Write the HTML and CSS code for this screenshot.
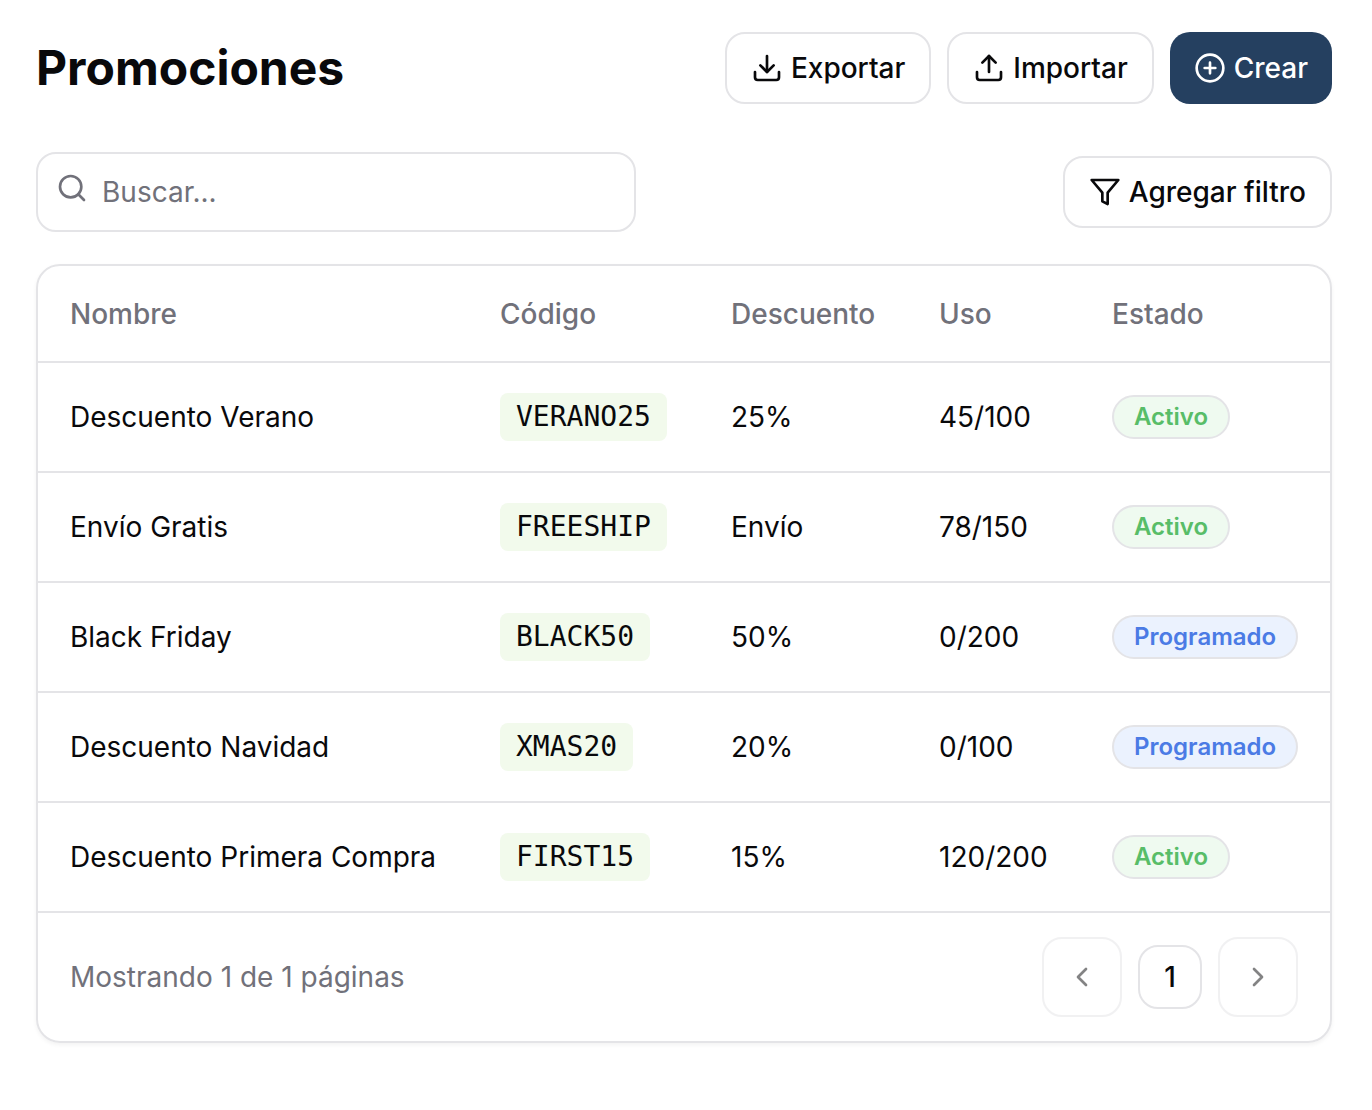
FILE: index.html
```html
<!DOCTYPE html>
<html lang="es">
<head>
<meta charset="utf-8">
<meta name="viewport" content="width=device-width, initial-scale=1">
<title>Promociones</title>
<link rel="stylesheet" href="styles.css">
</head>
<body>
<main class="page">
  <header class="page-header">
    <h1 class="page-title">Promociones</h1>
    <div class="actions">
      <button class="btn" type="button">
        <svg class="icon" viewBox="0 0 24 24" aria-hidden="true"><path d="M21 15v4a2 2 0 0 1-2 2H5a2 2 0 0 1-2-2v-4"/><path d="M7 10l5 5 5-5"/><path d="M12 15V3"/></svg>
        Exportar
      </button>
      <button class="btn" type="button">
        <svg class="icon" viewBox="0 0 24 24" aria-hidden="true"><path d="M21 15v4a2 2 0 0 1-2 2H5a2 2 0 0 1-2-2v-4"/><path d="M17 8l-5-5-5 5"/><path d="M12 3v12"/></svg>
        Importar
      </button>
      <button class="btn btn-primary" type="button">
        <svg class="icon" viewBox="0 0 24 24" aria-hidden="true"><circle cx="12" cy="12" r="10"/><path d="M8 12h8M12 8v8"/></svg>
        Crear
      </button>
    </div>
  </header>

  <div class="toolbar">
    <label class="search">
      <svg class="icon search-icon" viewBox="0 0 24 24" aria-hidden="true"><circle cx="11" cy="11" r="8"/><path d="M21 21l-4.3-4.3"/></svg>
      <input class="search-input" type="text" placeholder="Buscar..." aria-label="Buscar">
    </label>
    <button class="btn" type="button">
      <svg class="icon" viewBox="0 0 24 24" aria-hidden="true"><path d="M22 3H2l8 9.46V19l4 2v-8.54L22 3z"/></svg>
      Agregar filtro
    </button>
  </div>

  <section class="card">
    <table class="table">
      <thead>
        <tr><th class="col-name">Nombre</th><th class="col-code">Código</th><th class="col-discount">Descuento</th><th class="col-use">Uso</th><th>Estado</th></tr>
      </thead>
      <tbody>
        <tr><td>Descuento Verano</td><td><code class="code">VERANO25</code></td><td>25%</td><td>45/100</td><td><span class="badge badge-active">Activo</span></td></tr>
        <tr><td>Envío Gratis</td><td><code class="code">FREESHIP</code></td><td>Envío</td><td>78/150</td><td><span class="badge badge-active">Activo</span></td></tr>
        <tr><td>Black Friday</td><td><code class="code">BLACK50</code></td><td>50%</td><td>0/200</td><td><span class="badge badge-scheduled">Programado</span></td></tr>
        <tr><td>Descuento Navidad</td><td><code class="code">XMAS20</code></td><td>20%</td><td>0/100</td><td><span class="badge badge-scheduled">Programado</span></td></tr>
        <tr><td>Descuento Primera Compra</td><td><code class="code">FIRST15</code></td><td>15%</td><td>120/200</td><td><span class="badge badge-active">Activo</span></td></tr>
      </tbody>
    </table>
    <footer class="card-footer">
      <p class="summary">Mostrando 1 de 1 páginas</p>
      <nav class="pager" aria-label="Paginación">
        <button class="pager-step" type="button" disabled aria-label="Anterior"><svg class="icon" viewBox="0 0 24 24" aria-hidden="true"><path d="M15 18l-6-6 6-6"/></svg></button>
        <button class="pager-page" type="button" aria-current="page">1</button>
        <button class="pager-step" type="button" disabled aria-label="Siguiente"><svg class="icon" viewBox="0 0 24 24" aria-hidden="true"><path d="M9 18l6-6-6-6"/></svg></button>
      </nav>
    </footer>
  </section>
</main>
</body>
</html>
```

FILE: styles.css
```css
:root {
  --border: #e4e4e7;
  --text: #09090b;
  --muted: #71717a;
  --primary: #254060;
}

* {
  box-sizing: border-box;
}

body {
  margin: 0;
  background: #fff;
  color: var(--text);
  font-family: Inter, "Liberation Sans", sans-serif;
  font-size: 28px;
  line-height: 40px;
}

button,
input {
  font: inherit;
  color: inherit;
}

.page {
  display: flex;
  flex-direction: column;
  gap: 32px;
  padding: 32px 40px 32px 36px;
}

.page-header {
  display: flex;
  align-items: center;
  justify-content: space-between;
  margin-bottom: 16px;
}

.page-title {
  margin: 0;
  font-size: 48px;
  line-height: 64px;
  font-weight: 700;
}

.actions {
  display: flex;
  gap: 16px;
}

.btn {
  display: inline-flex;
  align-items: center;
  gap: 8px;
  height: 72px;
  padding: 0 24px;
  border: 2px solid var(--border);
  border-radius: 20px;
  background: #fff;
  font-weight: 500;
  white-space: nowrap;
}

.btn-primary {
  border: 0;
  background: var(--primary);
  color: #fff;
}

.icon {
  flex: none;
  width: 32px;
  height: 32px;
  fill: none;
  stroke: currentColor;
  stroke-width: 2;
  stroke-linecap: round;
  stroke-linejoin: round;
}

.toolbar {
  display: flex;
  align-items: center;
  justify-content: space-between;
  gap: 32px;
}

.search {
  display: flex;
  gap: 14px;
  width: 600px;
  height: 80px;
  padding: 18px;
  border: 2px solid var(--border);
  border-radius: 20px;
}

.search-icon {
  color: var(--muted);
}

.search-input {
  flex: 1;
  min-width: 0;
  padding: 0;
  border: 0;
  outline: 0;
  background: transparent;
}

.search-input::placeholder {
  color: var(--muted);
  opacity: 1;
}

.card {
  border: 2px solid var(--border);
  border-radius: 24px;
  box-shadow: 0 2px 4px rgba(0, 0, 0, 0.05);
}

.table {
  width: 100%;
  border-collapse: separate;
  border-spacing: 0;
  table-layout: fixed;
}

.table th,
.table td {
  padding: 0 0 0 32px;
  border-bottom: 2px solid var(--border);
  text-align: left;
  white-space: nowrap;
}

.table th {
  height: 97px;
  color: var(--muted);
  font-weight: 500;
}

.table td {
  height: 110px;
}

.col-name {
  width: 430px;
}

.col-code {
  width: 231px;
}

.col-discount {
  width: 208px;
}

.col-use {
  width: 173px;
}

.code {
  display: inline-block;
  padding: 4px 16px;
  border-radius: 8px;
  background: #f2faec;
  font-family: "DejaVu Sans Mono", monospace;
  font-size: 28px;
  vertical-align: middle;
}

.badge {
  display: inline-block;
  padding: 4px 20px;
  border: 2px solid var(--border);
  border-radius: 22px;
  font-size: 24px;
  line-height: 32px;
  font-weight: 600;
  vertical-align: middle;
}

.badge-active {
  background: #effaf0;
  color: #58bd68;
}

.badge-scheduled {
  background: #ebf2fe;
  color: #4b7be5;
}

.card-footer {
  display: flex;
  align-items: center;
  justify-content: space-between;
  padding: 24px 32px;
}

.summary {
  margin: 0;
  color: var(--muted);
}

.pager {
  display: flex;
  align-items: center;
  gap: 16px;
}

.pager-step,
.pager-page {
  display: flex;
  align-items: center;
  justify-content: center;
  padding: 0;
  border: 2px solid var(--border);
  border-radius: 20px;
  background: #fff;
}

.pager-step {
  width: 80px;
  height: 80px;
  opacity: 0.5;
}

.pager-page {
  width: 64px;
  height: 64px;
  font-weight: 500;
}
```
